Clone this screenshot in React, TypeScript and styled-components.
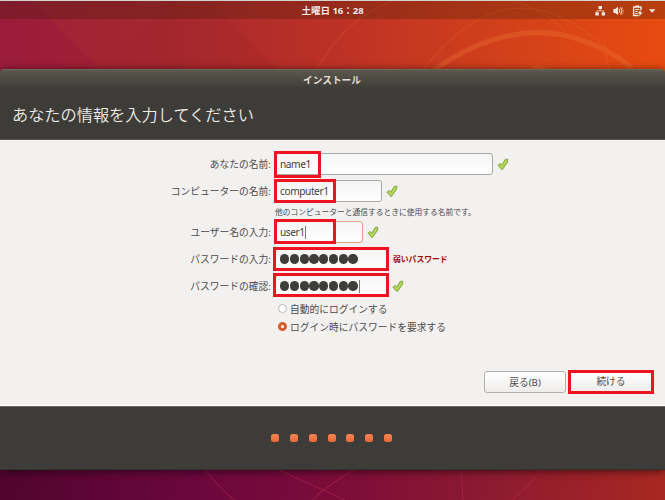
import React from "react";
import styled, { createGlobalStyle, css } from "styled-components";

const jp = `"Noto Sans CJK JP", sans-serif`;

const GlobalStyle = createGlobalStyle`
  * { box-sizing: border-box; }
  body { margin: 0; overflow: hidden; background: #8a1830; }
`;

const Desktop = styled.div`
  position: relative;
  width: 665px;
  height: 500px;
  overflow: hidden;
  display: flex;
  flex-direction: column;
  font-family: "Noto Sans", ${jp};
  color: #4c4c4c;
`;

const Wallpaper = styled.svg`
  position: absolute;
  inset: 0;
`;

const TopBar = styled.header`
  position: relative;
  height: 19px;
  margin-bottom: 50px;
  border-top: 1px solid #d5d2cf;
  background: rgba(40, 25, 0, 0.25);
  display: grid;
  grid-template-columns: 1fr auto 1fr;
  align-items: center;
`;

const Clock = styled.span`
  grid-column: 2;
  color: #f4eeea;
  font: 700 9.6px/18px "Noto Sans", ${jp};
  letter-spacing: -0.08px;
  padding-top: 1px;
  white-space: pre;
  text-shadow: 0 0 1px rgba(0, 0, 0, 0.4);
`;

const Tray = styled.div`
  display: flex;
  justify-content: flex-end;
  padding-right: 10px;
`;

const Window = styled.main`
  position: relative;
  height: 401px;
  display: flex;
  flex-direction: column;
  border-radius: 4px 4px 0 0;
  box-shadow: 0 1px 9px rgba(0, 0, 0, 0.6);
  overflow: hidden;
`;

const TitleBar = styled.div`
  height: 19px;
  flex: none;
  border-top: 1px solid #69675e;
  background: linear-gradient(#5b584e, #3f3d38);
  color: #e3dfd6;
  font: 700 9.7px/20px ${jp};
  text-align: center;
  text-indent: -1px;
`;

const Heading = styled.h1`
  margin: 0;
  height: 52px;
  flex: none;
  padding-left: 12px;
  background: #3d3c38;
  border-bottom: 1px solid #55534d;
  color: #eeebe3;
  font: 350 16.2px/53px ${jp};
`;

const Body = styled.section`
  flex: 1;
  display: flex;
  flex-direction: column;
  background: #f2f1f0;
  border-bottom: 1px solid #fff;
`;

const Footer = styled.footer`
  height: 64px;
  flex: none;
  display: flex;
  align-items: center;
  justify-content: center;
  gap: 10.8px;
  border-top: 1px solid #686660;
  border-bottom: 1px solid #32312e;
  background: #3d3c38;
  padding-right: 2px;
`;

const Step = styled.span`
  width: 8px;
  height: 8px;
  border-radius: 2.5px;
  background: linear-gradient(#fa8652, #e96937);
`;

const Row = styled.div<{ $gap: number }>`
  display: flex;
  align-items: center;
  height: 22px;
  margin-top: ${(p) => p.$gap}px;
`;

const Label = styled.label`
  width: 275px;
  padding-right: 4px;
  text-align: right;
  font: 400 9.75px/24px ${jp};
`;

const Field = styled.div<{ $width: number; $active?: boolean }>`
  position: relative;
  width: ${(p) => p.$width}px;
  height: 22px;
  display: flex;
  align-items: center;
  padding-left: 4px;
  border: 1px solid ${(p) => (p.$active ? "#e6a083" : "#aaa8a4")};
  border-radius: 3px;
  background: linear-gradient(#f5f5f5, #fff);
  color: #3e3e3e;
  font-size: 10.2px;
  letter-spacing: -0.45px;
  line-height: 22px;
`;

const frame = css`
  border: 3px solid #ed1320;
  pointer-events: none;
`;

const Highlight = styled.span<{ $width: number; $height: number; $left?: number; $top?: number }>`
  position: absolute;
  left: ${(p) => p.$left ?? -2}px;
  top: ${(p) => p.$top ?? -3}px;
  width: ${(p) => p.$width}px;
  height: ${(p) => p.$height}px;
  ${frame}
`;

const Caret = styled.i`
  width: 1px;
  height: 13px;
  background: #777;
`;

const Bullets = styled.span`
  display: flex;
  gap: 0.5px;
  padding-right: 1px;
`;

const Bullet = styled.i`
  width: 9.25px;
  height: 9.5px;
  border-radius: 50%;
  background: #3e3d3a;
`;

const Hint = styled.p`
  margin: 3px 0 0 275px;
  height: 14px;
  font: 400 7.75px/14px ${jp};
`;

const Weak = styled.strong`
  margin-left: 5px;
  color: #a00808;
  font: 700 7.8px/22px ${jp};
`;

const Choice = styled.div<{ $gap: number }>`
  margin: ${(p) => p.$gap}px 0 0 278px;
  height: 14px;
  display: flex;
  align-items: center;
  gap: 3px;
  font: 400 9.75px/14px ${jp};
`;

const Radio = styled.span<{ $on?: boolean }>`
  width: 9px;
  height: 9px;
  margin-bottom: 2px;
  border-radius: 50%;
  border: ${(p) => (p.$on ? "3px solid #d75c2c" : "1px solid #bab8b5")};
  background: #fff;
`;

const Actions = styled.div`
  margin: 36px 11px 0 0;
  display: flex;
  justify-content: flex-end;
  align-items: flex-start;
  gap: 2px;
`;

const Button = styled.button<{ $framed?: boolean }>`
  padding: 0;
  height: 22px;
  width: 82px;
  margin-top: 1px;
  border: 1px solid #b2b0ac;
  border-radius: 3px;
  background: linear-gradient(#fff, #eeedeb);
  color: #4c4c4c;
  font: 400 9.75px/22px "Noto Sans", ${jp};
  ${(p) =>
    p.$framed &&
    css`
      ${frame}
      width: 86px;
      height: 24px;
      margin-top: 0;
      border-radius: 0;
      line-height: 18px;
    `}
`;

const CheckIcon = styled.svg`
  margin-left: 4px;
  flex: none;
`;

const Check = () => (
  <CheckIcon width="12" height="13" viewBox="0 0 12 13">
    <path d="M.9 7.2 3.1 5.5 4.8 7.1 8.2 1.4 10.8 1.2 10.6 4.2 5.2 11.8Z" fill="#a5cf45" stroke="#7fa23f" strokeWidth=".9" strokeLinejoin="round" />
    <path d="M2.5 7.1 5.1 9.3 9.6 2.5" fill="none" stroke="#c8e070" strokeWidth="1" />
  </CheckIcon>
);

const Password = () => (
  <Bullets>
    {Array.from({ length: 8 }, (_, i) => <Bullet key={i} />)}
  </Bullets>
);

const Background = () => (
  <Wallpaper width="665" height="500" viewBox="0 0 665 500">
    <defs>
      <linearGradient id="sky" x1="0" x2="1">
        <stop offset="0" stopColor="#9d203a" />
        <stop offset=".25" stopColor="#a6272e" />
        <stop offset=".5" stopColor="#bc3126" />
        <stop offset=".75" stopColor="#d1401b" />
        <stop offset="1" stopColor="#e84b10" />
      </linearGradient>
      <linearGradient id="ground" x1="0" x2="1">
        <stop offset="0" stopColor="#50042e" />
        <stop offset=".3" stopColor="#6c073d" />
        <stop offset=".5" stopColor="#7b0c39" />
        <stop offset=".75" stopColor="#8e1b30" />
        <stop offset="1" stopColor="#a92721" />
      </linearGradient>
    </defs>
    <path d="M0 0H665V250H0Z" fill="url(#sky)" />
    <path d="M0 250H665V500H0Z" fill="url(#ground)" />
    <path d="M30 0 100 70H0V0Z" fill="#950c44" opacity=".18" />
    <path d="M170 0 100 70H280L210 0Z" fill="#93202a" opacity=".12" />
    <g fill="none" stroke="#f07a37" opacity=".3">
      <path d="M430 73Q535-4 630 66L631 73" strokeWidth="5" />
      <path d="M423 70Q510-43 608 50L628 67" strokeWidth="1" />
      <path d="M333 45Q355 15 395 0M510 0Q548 10 569 36M605 38Q604 53 609 70M315 70 333 45" strokeWidth="1" />
    </g>
    <circle cx="538" cy="77" r="12" fill="#e15a2c" opacity=".6" />
    <g fill="none" stroke="#b52a4d" strokeWidth="1.2" opacity=".5">
      <path d="M205 469Q216 485 234 500M277 469 345 500M312 500Q330 483 356 469M461 469 463 500M541 469Q530 485 512 500" />
    </g>
  </Wallpaper>
);

const TrayIcons = () => (
  <svg width="60" height="14" viewBox="595 3 60 14" fill="#f3ece6">
    <path d="M598.5 5h3.5v3h-3.5zM595.4 11.3h3.4v3.2h-3.4zM601.7 11.3h3.4v3.2h-3.4z" />
    <path d="M600.2 8v1.7M597 11V9.8h6.5V11" fill="none" stroke="#e3b6a2" />
    <path d="M613.4 8h1.8l2.7-2.4v8.5L615.2 12h-1.8z" />
    <path d="M619 7.5q1.5 2.3 0 4.6M620.7 6.3q2.4 3.6 0 7.2" fill="none" stroke="#f3ece6" />
    <path d="M622 5.5q3 4.4 0 8.8" fill="none" stroke="#d69679" strokeWidth=".7" />
    <path d="M633.6 6h7.4v3M638.5 14.5h-4.9V5.4" fill="none" stroke="#f3ece6" strokeWidth="1.4" />
    <path d="M635.3 4.4h3.8v1.6h-3.8zM635.3 8h4v1h-4zM635.3 10h2.5v1h-2.5zM635.3 12h2v1h-2zM640.6 9l-3 3.4h2l-.5 2.8 3.6-3.8h-2z" />
    <path d="M649 8.3h6.4l-3.2 3.4z" />
  </svg>
);

export default function App() {
  return (
    <>
      <GlobalStyle />
      <Desktop>
        <Background />
        <TopBar>
          <Clock>土曜日 16：28</Clock>
          <Tray><TrayIcons /></Tray>
        </TopBar>
        <Window>
          <TitleBar>インストール</TitleBar>
          <Heading>あなたの情報を入力してください</Heading>
          <Body>
            <Row $gap={13}>
              <Label>あなたの名前:</Label>
              <Field $width={218}>name1<Highlight $width={47} $height={27} /></Field>
              <Check />
            </Row>
            <Row $gap={5}>
              <Label>コンピューターの名前:</Label>
              <Field $width={107}>computer1<Highlight $width={62} $height={24} $top={-2} /></Field>
              <Check />
            </Row>
            <Hint>他のコンピューターと通信するときに使用する名前です。</Hint>
            <Row $gap={2}>
              <Label>ユーザー名の入力:</Label>
              <Field $width={88} $active>user1<Caret /><Highlight $width={62} $height={25} /></Field>
              <Check />
            </Row>
            <Row $gap={5}>
              <Label>パスワードの入力:</Label>
              <Field $width={113}><Password /><Highlight $left={-3} $top={-2} $width={116} $height={24} /></Field>
              <Weak>弱いパスワード</Weak>
            </Row>
            <Row $gap={5}>
              <Label>パスワードの確認:</Label>
              <Field $width={113}><Password /><Caret /><Highlight $left={-3} $width={116} $height={24} /></Field>
              <Check />
            </Row>
            <Choice $gap={5}><Radio />自動的にログインする</Choice>
            <Choice $gap={4}><Radio $on />ログイン時にパスワードを要求する</Choice>
            <Actions>
              <Button>戻る(B)</Button>
              <Button $framed>続ける</Button>
            </Actions>
          </Body>
          <Footer>
            {Array.from({ length: 7 }, (_, i) => <Step key={i} />)}
          </Footer>
        </Window>
      </Desktop>
    </>
  );
}
